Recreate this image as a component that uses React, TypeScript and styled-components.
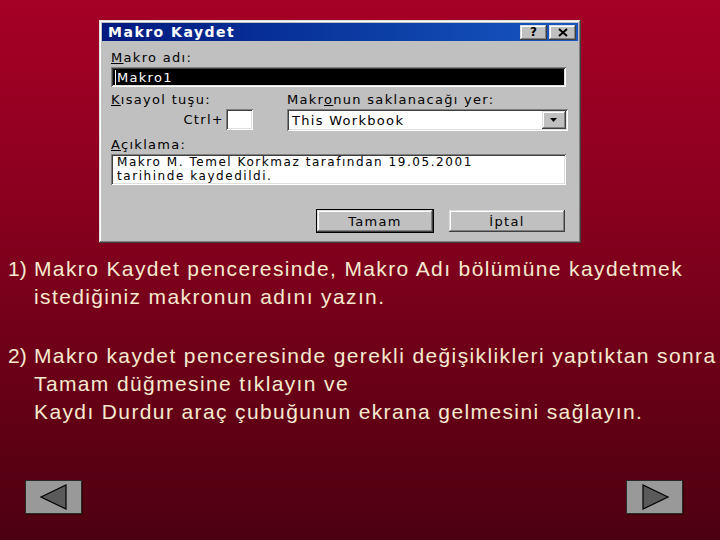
import styled, { createGlobalStyle } from 'styled-components';

const GlobalStyle = createGlobalStyle`
  html, body {
    margin: 0;
    padding: 0;
  }
  body {
    width: 720px;
    height: 540px;
    overflow: hidden;
    background: linear-gradient(180deg, #a60026 0%, #8c001f 35%, #6e0018 65%, #4c0010 100%);
  }
`;

const raised = `
  box-shadow: inset -1px -1px #404040, inset 1px 1px #dfdfdf,
    inset -2px -2px #808080, inset 2px 2px #ffffff;
`;

const sunken = `
  box-shadow: inset 1px 1px #808080, inset -1px -1px #ffffff,
    inset 2px 2px #404040, inset -2px -2px #dfdfdf;
`;

const winFont = `
  font-family: 'DejaVu Sans', 'Liberation Sans', sans-serif;
  font-size: 13px;
  letter-spacing: 1.3px;
  color: #000;
`;

const App = () => {
  return (
    <>
      <GlobalStyle />
      <Slide>
        <Dialog>
          <TitleBar>
            <Title>Makro Kaydet</Title>
            <TitleButtons>
              <TitleButton>?</TitleButton>
              <TitleButton>
                <svg width="10" height="9" viewBox="0 0 10 9">
                  <path d="M1 1 L9 8 M9 1 L1 8" stroke="#000" strokeWidth="2" />
                </svg>
              </TitleButton>
            </TitleButtons>
          </TitleBar>
          <Body>
            <Label>
              <u>M</u>akro adı:
            </Label>
            <NameField>
              <Caret />
              Makro1
            </NameField>
            <MiddleRow>
              <div>
                <Label>
                  <u>K</u>ısayol tuşu:
                </Label>
                <ShortcutRow>
                  <span>Ctrl+</span>
                  <KeyBox />
                </ShortcutRow>
              </div>
              <div>
                <Label>
                  Makr<u>o</u>nun saklanacağı yer:
                </Label>
                <Select>
                  <span>This Workbook</span>
                  <DropButton>
                    <svg width="8" height="4" viewBox="0 0 8 4">
                      <path d="M0 0 H7 L3.5 4 Z" fill="#000" />
                    </svg>
                  </DropButton>
                </Select>
              </div>
            </MiddleRow>
            <Label $top={7}>
              <u>A</u>çıklama:
            </Label>
            <Description>
              <DescLine>Makro M. Temel Korkmaz tarafından 19.05.2001</DescLine>
              <DescLine>tarihinde kaydedildi.</DescLine>
            </Description>
            <ButtonRow>
              <PushButton $primary>Tamam</PushButton>
              <PushButton>İptal</PushButton>
            </ButtonRow>
          </Body>
        </Dialog>

        <Steps>
          <Step>
            <Num>1)</Num>
            <StepText>
              Makro Kaydet penceresinde, Makro Adı bölümüne kaydetmek
              <br />
              istediğiniz makronun adını yazın.
            </StepText>
          </Step>
          <Step>
            <Num>2)</Num>
            <StepText>
              Makro kaydet penceresinde gerekli değişiklikleri yaptıktan sonra
              <br />
              Tamam düğmesine tıklayın ve
              <br />
              Kaydı Durdur araç çubuğunun ekrana gelmesini sağlayın.
            </StepText>
          </Step>
        </Steps>

        <NavBar>
          <NavButton aria-label="Önceki">
            <svg width="28" height="26" viewBox="0 0 28 26">
              <path d="M1 13 L26 1 L26 25 Z" fill="#5a5a5a" stroke="#000" strokeWidth="1.2" />
            </svg>
          </NavButton>
          <NavButton aria-label="Sonraki">
            <svg width="28" height="26" viewBox="0 0 28 26">
              <path d="M27 13 L2 1 L2 25 Z" fill="#5a5a5a" stroke="#000" strokeWidth="1.2" />
            </svg>
          </NavButton>
        </NavBar>
      </Slide>
    </>
  );
};
export default App;

const Slide = styled.div`
  width: 720px;
  height: 540px;
  display: flex;
  flex-direction: column;
`;

const Dialog = styled.div`
  margin: 20px 0 0 99px;
  width: 482px;
  height: 223px;
  box-sizing: border-box;
  padding: 3px;
  background: #c0c0c0;
  ${raised}
  ${winFont}
`;

const TitleBar = styled.div`
  height: 18px;
  display: flex;
  align-items: center;
  justify-content: space-between;
  padding: 0 2px 0 6px;
  background: linear-gradient(90deg, #001a80 0%, #0c3fa6 60%, #1856c2 100%);
`;

const Title = styled.span`
  font-family: 'DejaVu Sans', 'Liberation Sans', sans-serif;
  font-weight: bold;
  font-size: 14px;
  letter-spacing: 1.5px;
  color: #fff;
`;

const TitleButtons = styled.div`
  display: flex;
  gap: 2px;
`;

const TitleButton = styled.div`
  width: 27px;
  height: 15px;
  box-sizing: border-box;
  display: flex;
  align-items: center;
  justify-content: center;
  background: #c0c0c0;
  font-family: 'DejaVu Sans', sans-serif;
  font-weight: bold;
  font-size: 12px;
  letter-spacing: 0;
  ${raised}
`;

const Body = styled.div`
  padding: 10px 12px 0 9px;
  display: flex;
  flex-direction: column;
`;

const Label = styled.div<{ $top?: number }>`
  height: 14px;
  line-height: 14px;
  margin-top: ${(p) => p.$top ?? 0}px;
  margin-bottom: 2px;
  white-space: nowrap;
`;

const NameField = styled.div`
  height: 20px;
  box-sizing: border-box;
  padding: 2px 4px;
  display: flex;
  align-items: center;
  background: #000;
  color: #fff;
  ${sunken}
`;

const Caret = styled.span`
  width: 1px;
  height: 15px;
  margin-right: 1px;
  background: #fff;
`;

const MiddleRow = styled.div`
  display: grid;
  grid-template-columns: 176px 1fr;
  margin-top: 6px;
  margin-right: -2px;
`;

const ShortcutRow = styled.div`
  display: flex;
  align-items: center;
  justify-content: flex-end;
  gap: 2px;
  width: 142px;
`;

const KeyBox = styled.div`
  width: 27px;
  height: 21px;
  box-sizing: border-box;
  background: #fff;
  ${sunken}
`;

const Select = styled.div`
  height: 22px;
  box-sizing: border-box;
  padding: 2px 2px 2px 5px;
  display: flex;
  align-items: center;
  justify-content: space-between;
  background: #fff;
  ${sunken}
`;

const DropButton = styled.div`
  width: 24px;
  height: 18px;
  box-sizing: border-box;
  display: flex;
  align-items: center;
  justify-content: center;
  background: #c0c0c0;
  ${raised}
`;

const Description = styled.div`
  height: 31px;
  box-sizing: border-box;
  padding: 1px 6px 0;
  display: flex;
  flex-direction: column;
  background: #fff;
  white-space: nowrap;
  ${sunken}
`;

const DescLine = styled.div`
  height: 14px;
  line-height: 14px;
  font-size: 12px;
  letter-spacing: 1.55px;
`;

const ButtonRow = styled.div`
  display: flex;
  justify-content: flex-end;
  gap: 14px;
  margin-top: 24px;
`;

const PushButton = styled.div<{ $primary?: boolean }>`
  width: 118px;
  height: 24px;
  box-sizing: border-box;
  display: flex;
  align-items: center;
  justify-content: center;
  background: #c0c0c0;
  border: 1px solid ${(p) => (p.$primary ? '#000' : 'transparent')};
  ${raised}
`;

const Steps = styled.div`
  margin-top: 12px;
  padding-left: 8px;
  display: flex;
  flex-direction: column;
  gap: 31px;
  font-family: 'Liberation Sans', Arial, sans-serif;
  font-size: 21px;
  line-height: 28px;
  letter-spacing: 1.38px;
  color: #f6ead0;
`;

const Step = styled.div`
  display: flex;
`;

const Num = styled.span`
  width: 26px;
  flex: none;
  letter-spacing: 0;
`;

const StepText = styled.span`
  white-space: nowrap;
`;

const NavBar = styled.div`
  margin-top: auto;
  margin-bottom: 26px;
  display: flex;
  justify-content: space-between;
  padding: 0 37px 0 25px;
`;

const NavButton = styled.div`
  width: 57px;
  height: 34px;
  box-sizing: border-box;
  display: flex;
  align-items: center;
  justify-content: center;
  background: #999999;
  border: 1px solid #2a2a2a;
  box-shadow: 1px 1px 0 #3a0008;
`;
